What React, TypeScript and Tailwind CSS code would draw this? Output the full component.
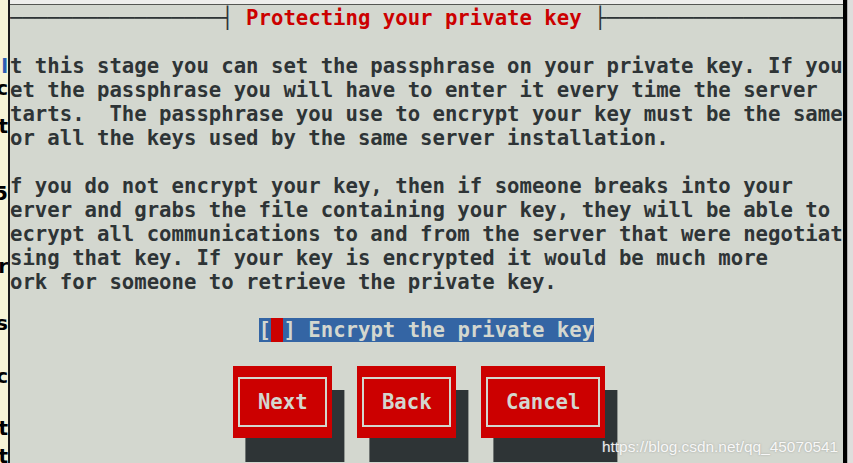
import React from 'react';

const LINES_A = [
  't this stage you can set the passphrase on your private key. If you',
  'et the passphrase you will have to enter it every time the server',
  'tarts.  The passphrase you use to encrypt your key must be the same',
  'or all the keys used by the same server installation.',
];

const LINES_B = [
  'f you do not encrypt your key, then if someone breaks into your',
  'erver and grabs the file containing your key, they will be able to',
  'ecrypt all communications to and from the server that were negotiat',
  'sing that key. If your key is encrypted it would be much more',
  'ork for someone to retrieve the private key.',
];

// bits of the window behind, cut off at the left edge
const FRAGMENTS: { top: string; text: string; blue?: boolean }[] = [
  { top: 'mt-[56px]', text: 'l', blue: true },
  { top: 'mt-[2px]', text: 'c' },
  { top: 'mt-[18px]', text: 't' },
  { top: 'mt-[47px]', text: '5' },
  { top: 'mt-[53px]', text: 'r' },
  { top: 'mt-[37px]', text: 's' },
  { top: 'mt-[33px]', text: 'c' },
  { top: 'mt-[32px]', text: 't' },
  { top: 'mt-[8px]', text: 't' },
];

const Row = ({ children }: { children?: React.ReactNode }) => (
  <div className="h-[24px] leading-[24px] whitespace-pre">{children}</div>
);

const TuiButton = ({ label, wide }: { label: string; wide?: boolean }) => (
  <div
    className={`${wide ? 'w-[124px]' : 'w-[99.2px]'} h-[72px] bg-[#cc0000] px-[5px] py-[11px] flex shadow-[12.4px_24px_0_0_#2e3436]`}
  >
    <div className="flex-1 border-2 border-[#d3d7cf] flex items-center justify-center text-[#d3d7cf]">
      {label}
    </div>
  </div>
);

export default function App() {
  return (
    <div className="w-[853px] h-[463px] overflow-hidden flex bg-[#d3d7cf]">
      {/* left strip */}
      <div className="w-[8px] bg-[#f6f4d6] overflow-hidden flex flex-col items-end font-['DejaVu_Sans',sans-serif] font-bold text-[20px] leading-[20px] text-black">
        {FRAGMENTS.map((f, i) => (
          <div key={i} className={`${f.top} h-[20px] ${f.blue ? 'text-[#2b5fb4]' : ''}`}>
            {f.text}
          </div>
        ))}
      </div>
      <div className="w-[2px] bg-[#1a1a1a]" />

      {/* terminal */}
      <div className="w-[833px] flex flex-col">
        <div className="h-[4px] bg-[#eeeeec]" />
        <div className="h-[1px] bg-[#555753]" />
        <div className="flex-1 relative overflow-hidden bg-[#d3d7cf] pt-[1px] font-['DejaVu_Sans_Mono',monospace] font-bold text-[20.65px] text-[#2e3436]">
          <Row>
            {'─────────────────┤ '}
            <span className="text-[#cc0000]">Protecting your private key</span>
            {' ├──────────────────────'}
          </Row>
          <Row />
          {LINES_A.map((l) => (
            <Row key={l}>{l}</Row>
          ))}
          <Row />
          {LINES_B.map((l) => (
            <Row key={l}>{l}</Row>
          ))}
          <Row />
          <Row>
            {'                    '}
            <span className="bg-[#3465a4] text-[#d3d7cf]">
              [<span className="bg-[#cc0000]"> </span>] Encrypt the private key
            </span>
          </Row>
          <Row />
          <div className="flex gap-[24.8px] pl-[223.2px]">
            <TuiButton label="Next" />
            <TuiButton label="Back" />
            <TuiButton label="Cancel" wide />
          </div>

          <div className="absolute left-[592px] top-[430px] font-['Liberation_Sans',sans-serif] font-normal text-[15.4px] text-white/90 [text-shadow:0_0_2px_rgba(120,120,120,0.6)]">
            https://blog.csdn.net/qq_45070541
          </div>
        </div>
      </div>

      {/* right edge */}
      <div className="w-[4px] bg-black" />
      <div className="w-[6px] bg-[#dededc] border-l border-[#b0b0b0]" />
    </div>
  );
}
